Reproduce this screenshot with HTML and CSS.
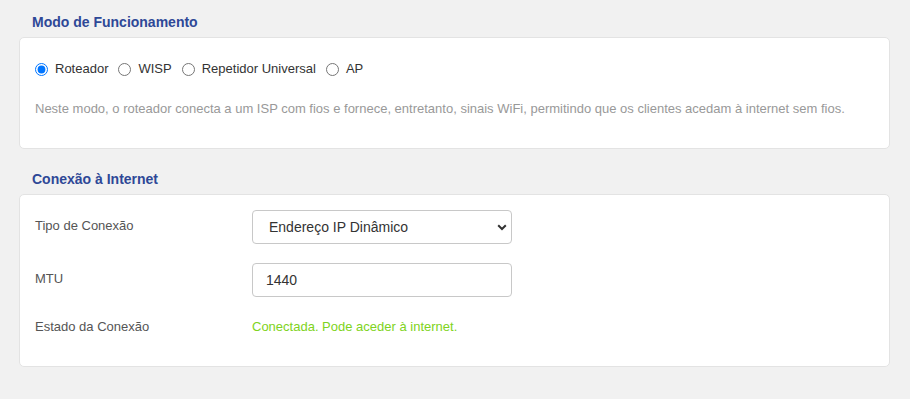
FILE: index.html
```html
<!DOCTYPE html>
<html lang="pt">
<head>
<meta charset="utf-8">
<title>Internet</title>
<link rel="stylesheet" href="styles.css">
</head>
<body>
<div class="page">
  <h2 class="title">Modo de Funcionamento</h2>
  <div class="card card-mode">
    <div class="radios">
      <label class="radio"><input type="radio" name="mode" checked><span>Roteador</span></label>
      <label class="radio"><input type="radio" name="mode"><span>WISP</span></label>
      <label class="radio"><input type="radio" name="mode"><span>Repetidor Universal</span></label>
      <label class="radio"><input type="radio" name="mode"><span>AP</span></label>
    </div>
    <p class="desc">Neste modo, o roteador conecta a um ISP com fios e fornece, entretanto, sinais WiFi, permitindo que os clientes acedam à internet sem fios.</p>
  </div>

  <h2 class="title title-2">Conexão à Internet</h2>
  <div class="card card-net">
    <div class="row">
      <div class="label">Tipo de Conexão</div>
      <div class="select-wrap">
        <select class="control select">
          <option>Endereço IP Dinâmico</option>
        </select>
        <svg class="chev" width="10" height="7" viewBox="0 0 10 7"><path d="M1.2 1.2 L5 5 L8.8 1.2" fill="none" stroke="#333" stroke-width="2"/></svg>
      </div>
    </div>
    <div class="row row-mtu">
      <div class="label">MTU</div>
      <input class="control input" type="text" value="1440">
    </div>
    <div class="row row-status">
      <div class="label">Estado da Conexão</div>
      <div class="status">Conectada. Pode aceder à internet.</div>
    </div>
  </div>
</div>
</body>
</html>
```

FILE: styles.css
```css
* { box-sizing: border-box; }
html, body {
  margin: 0;
  background: #f1f1f1;
}
body {
  font-family: "Liberation Sans", Arial, sans-serif;
  color: #333;
  font-size: 13px;
}
.page {
  padding: 12px 20px 0 19px;
}
.title {
  margin: 0 0 5px 13px;
  font-size: 14px;
  line-height: 20px;
  font-weight: bold;
  color: #2e4897;
}
.title-2 {
  margin-top: 20px;
  margin-bottom: 5px;
}
.card {
  background: #fff;
  border: 1px solid #e3e3e3;
  border-radius: 5px;
}
.card-mode {
  padding: 21px 15px 29px 15px;
}
.radios {
  display: flex;
  align-items: center;
  height: 20px;
  gap: 10px;
}
.radio {
  display: flex;
  align-items: center;
  font-size: 13px;
  color: #333;
  line-height: 20px;
}
.radio input {
  margin: 0 7px 0 0;
  width: 13px;
  height: 13px;
}
.desc {
  margin: 20px 0 0 0;
  line-height: 20px;
  color: #999;
  font-size: 13px;
}
.card-net {
  padding: 15px 15px 29px 15px;
}
.row {
  display: grid;
  grid-template-columns: 217px 260px;
  align-items: center;
}
.row-mtu {
  margin-top: 19px;
}
.row-status {
  margin-top: 20px;
  height: 20px;
}
.label {
  color: #555;
  line-height: 20px;
  margin-top: -3px;
}
.row-status .label { margin-top: 0; }
.select-wrap {
  position: relative;
  height: 34px;
}
.control {
  width: 260px;
  height: 34px;
  border: 1px solid #c8c8c8;
  border-radius: 4px;
  background: #fff;
  font-family: inherit;
  font-size: 14px;
  color: #333;
  margin: 0;
  outline: none;
}
.select {
  appearance: none;
  -webkit-appearance: none;
  padding: 0 0 0 16px;
}
.input {
  padding: 0 0 0 13px;
}
.chev {
  position: absolute;
  right: 5px;
  top: 14px;
}
.status {
  color: #7ed321;
  line-height: 20px;
}
```
